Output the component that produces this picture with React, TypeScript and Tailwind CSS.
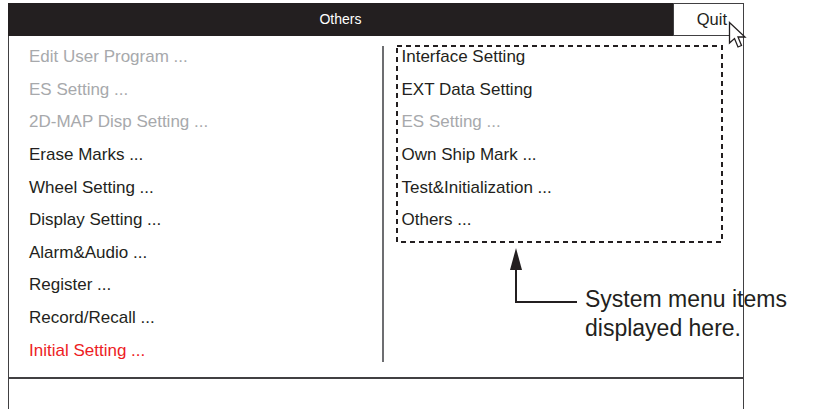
import React from 'react';

type Item = { label: string; tone?: 'dim' | 'red' };

const leftItems: Item[] = [
  { label: 'Edit User Program ...', tone: 'dim' },
  { label: 'ES Setting ...', tone: 'dim' },
  { label: '2D-MAP Disp Setting ...', tone: 'dim' },
  { label: 'Erase Marks ...' },
  { label: 'Wheel Setting ...' },
  { label: 'Display Setting ...' },
  { label: 'Alarm&Audio ...' },
  { label: 'Register ...' },
  { label: 'Record/Recall ...' },
  { label: 'Initial Setting ...', tone: 'red' },
];

const systemItems: Item[] = [
  { label: 'Interface Setting' },
  { label: 'EXT Data Setting' },
  { label: 'ES Setting ...', tone: 'dim' },
  { label: 'Own Ship Mark ...' },
  { label: 'Test&Initialization ...' },
  { label: 'Others ...' },
];

const toneClass = (tone?: Item['tone']) =>
  tone === 'dim' ? 'text-[#a7a9ac]' : tone === 'red' ? 'text-[#ed1c24]' : 'text-[#231f20]';

const MenuRow: React.FC<{ item: Item }> = ({ item }) => (
  <div className={`h-[32.6px] flex items-center text-[17px] whitespace-nowrap ${toneClass(item.tone)}`}>
    {item.label}
  </div>
);

export default function App() {
  return (
    <div className="relative w-[821px] h-[409px] bg-white overflow-hidden font-['Liberation_Sans',Arial,sans-serif]">
      <div className="ml-[8px] pt-[3px] w-[736px]">
        {/* title bar */}
        <div className="flex h-[33px] bg-[#231f20]">
          <div className="flex-1 flex items-center justify-center text-white text-[14px]">Others</div>
          <div className="w-[71px] bg-white border border-[#414042] flex items-center justify-end pr-[16px] text-[16.5px] text-[#231f20]">
            Quit
          </div>
        </div>

        {/* menu body */}
        <div className="flex h-[341px] border-x-[1.5px] border-[#414042] pt-[4.7px]">
          <div className="w-[373px] pl-[20px] flex flex-col">
            {leftItems.map((item, i) => (
              <MenuRow key={i} item={item} />
            ))}
          </div>
          <div className="w-[2px] h-[316px] mt-[5.3px] bg-[#6d6e71]" />
          <div className="relative ml-[11.5px] mt-[4.3px] w-[327px] h-[198px]">
            <svg className="absolute inset-0" width="327" height="198" viewBox="0 0 327 198">
              <rect x="1" y="1" width="325" height="196" fill="none" stroke="#231f20" strokeWidth="2" strokeDasharray="5 4" />
            </svg>
            <div className="relative -mt-[4.3px] pl-[6px] flex flex-col">
              {systemItems.map((item, i) => (
                <MenuRow key={i} item={item} />
              ))}
            </div>
          </div>
        </div>
        <div className="h-[2px] bg-[#414042]" />
        <div className="h-[40px] border-x-[1.5px] border-[#414042]" />
      </div>

      {/* mouse cursor over Quit */}
      <svg className="absolute left-[728px] top-[21px]" width="20" height="30" viewBox="0 0 20 30">
        <path d="M1.5 1.5 L1.5 22 L6.5 17.5 L10 26 L13.5 24.5 L10 16 L17 16 Z" fill="white" stroke="#231f20" strokeWidth="1.3" strokeLinejoin="miter" />
      </svg>

      {/* callout arrow */}
      <svg className="absolute left-[505px] top-[245px]" width="80" height="62" viewBox="0 0 80 62">
        <polygon points="11,3 5,25 17,25" fill="#231f20" />
        <path d="M11 22 L11 57 L72 57" fill="none" stroke="#231f20" strokeWidth="2" />
      </svg>
      <div className="absolute left-[585px] top-[285px] text-[23px] leading-[29px] text-[#231f20] whitespace-nowrap">
        System menu items
        <br />
        displayed here.
      </div>
    </div>
  );
}
